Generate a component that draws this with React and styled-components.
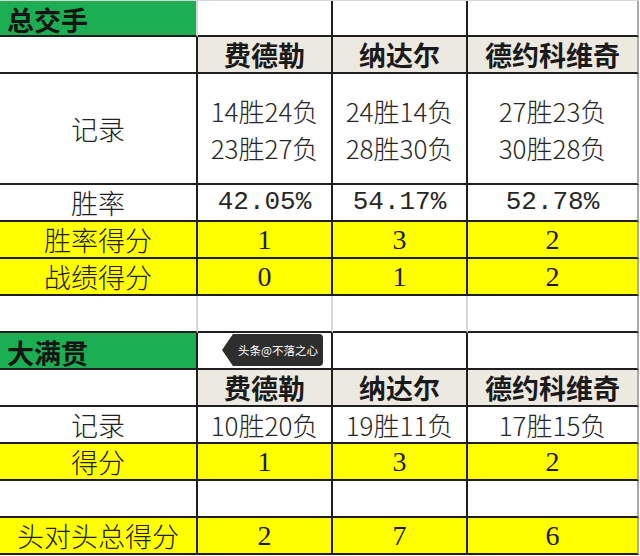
import React from "react";
import styled, { createGlobalStyle } from "styled-components";

const Global = createGlobalStyle`
  html, body { margin: 0; padding: 0; background: #ffffff; }
  body { font-family: "Noto Sans CJK SC", "Noto Sans", sans-serif; color: #1c1c1c; }
`;

const DARK = "#1f1f1f";
const LIGHT = "#d6d6d6";
const EDGE = "#a8a8a8";

const BG = {
  white: "#ffffff",
  green: "#1cae52",
  yellow: "#ffff00",
  head: "#ece9e1",
};

const Sheet = styled.div`
  display: grid;
  grid-template-columns: 198px 135px 135px 171px;
  grid-template-rows: 36px 37px 111px repeat(10, 37px);
  width: 639px;
  border-top: 1px solid ${LIGHT};
`;

const Cell = styled.div`
  position: relative;
  box-sizing: border-box;
  display: flex;
  flex-direction: column;
  justify-content: center;
  align-items: ${(p) => (p.$left ? "flex-start" : "center")};
  padding-left: ${(p) => (p.$left ? "7px" : "0")};
  padding-top: ${(p) => (p.$left ? "3px" : "0")};
  background: ${(p) => BG[p.$bg || "white"]};
  border-right: 2px solid ${(p) => p.$right || DARK};
  border-bottom: 2px solid ${(p) => p.$bottom || DARK};
  overflow: visible;
`;

const Label = styled.span`
  font-size: 27px;
  line-height: 37px;
  font-weight: 300;
  color: #202020;
  white-space: nowrap;
`;

const Title = styled.span`
  font-size: 27px;
  line-height: 33px;
  font-weight: 700;
  color: #141414;
  white-space: nowrap;
`;

const Name = styled.span`
  font-size: 27px;
  line-height: 35px;
  font-weight: 700;
  color: #1a1a1a;
  white-space: nowrap;
`;

const Record = styled.span`
  font-size: 26px;
  line-height: 37px;
  font-weight: 300;
  color: #262626;
  white-space: nowrap;
`;

const Percent = styled.span`
  font-family: "Liberation Mono", "DejaVu Sans Mono", monospace;
  font-size: 26px;
  line-height: 35px;
  color: #262626;
  white-space: nowrap;
`;

const Score = styled.span`
  font-family: "Liberation Serif", "DejaVu Serif", serif;
  font-size: 28px;
  line-height: 35px;
  color: #1c1c1c;
`;

const Badge = styled.div`
  position: absolute;
  left: 35px;
  top: 1px;
  width: 90px;
  height: 32px;
  background: #2e2e2e;
  border-radius: 0 4px 4px 0;
  color: #ffffff;
  font-size: 11.5px;
  display: flex;
  align-items: center;
  justify-content: center;
  white-space: nowrap;
  &::before {
    content: "";
    position: absolute;
    left: -11px;
    top: 0;
    border-top: 16px solid transparent;
    border-bottom: 16px solid transparent;
    border-right: 11px solid #2e2e2e;
  }
`;

const players = ["费德勒", "纳达尔", "德约科维奇"];

function Row({ label, bg, cells, rightCol, bottom, labelBg }) {
  return (
    <>
      <Cell $bg={labelBg || bg} $right={rightCol} $bottom={bottom}>
        {label ? <Label>{label}</Label> : null}
      </Cell>
      {cells.map((c, i) => (
        <Cell
          key={i}
          $bg={bg}
          $right={i === 2 ? EDGE : rightCol === LIGHT ? LIGHT : DARK}
          $bottom={bottom}
        >
          {c}
        </Cell>
      ))}
    </>
  );
}

export default function App() {
  const heads = players.map((p) => <Name key={p}>{p}</Name>);
  return (
    <>
      <Global />
      <Sheet>
        <Cell $bg="green" $left $right={LIGHT}>
          <Title>总交手</Title>
        </Cell>
        <Cell />
        <Cell />
        <Cell $right={EDGE} />

        <Row bg="head" labelBg="white" cells={heads} />

        <Row
          label="记录"
          cells={[
            ["14胜24负", "23胜27负"],
            ["24胜14负", "28胜30负"],
            ["27胜23负", "30胜28负"],
          ].map((pair, i) => (
            <React.Fragment key={i}>
              <Record>{pair[0]}</Record>
              <Record>{pair[1]}</Record>
            </React.Fragment>
          ))}
        />

        <Row
          label="胜率"
          cells={["42.05%", "54.17%", "52.78%"].map((v) => (
            <Percent key={v}>{v}</Percent>
          ))}
        />

        <Row
          label="胜率得分"
          bg="yellow"
          cells={["1", "3", "2"].map((v, i) => <Score key={i}>{v}</Score>)}
        />

        <Row
          label="战绩得分"
          bg="yellow"
          cells={["0", "1", "2"].map((v, i) => <Score key={i}>{v}</Score>)}
        />

        <Row rightCol={LIGHT} cells={[null, null, null]} />

        <Cell $bg="green" $left>
          <Title>大满贯</Title>
        </Cell>
        <Cell>
          <Badge>头条@不落之心</Badge>
        </Cell>
        <Cell />
        <Cell $right={EDGE} />

        <Row bg="head" labelBg="white" cells={heads} />

        <Row
          label="记录"
          cells={["10胜20负", "19胜11负", "17胜15负"].map((v) => (
            <Record key={v}>{v}</Record>
          ))}
        />

        <Row
          label="得分"
          bg="yellow"
          cells={["1", "3", "2"].map((v, i) => <Score key={i}>{v}</Score>)}
        />

        <Row cells={[null, null, null]} />

        <Row
          label="头对头总得分"
          bg="yellow"
          cells={["2", "7", "6"].map((v, i) => <Score key={i}>{v}</Score>)}
        />
      </Sheet>
    </>
  );
}
